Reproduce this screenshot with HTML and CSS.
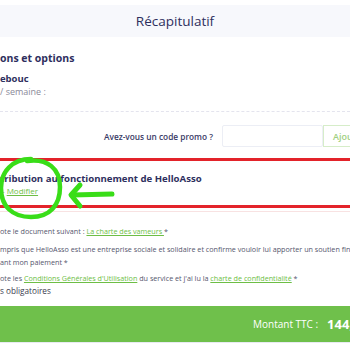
FILE: index.html
```html
<!DOCTYPE html>
<html lang="fr">
<head>
<meta charset="utf-8">
<link rel="stylesheet" href="styles.css">
</head>
<body>
<div class="page">
  <div class="header"><h1 class="title">Récapitulatif</h1></div>
  <div class="section">
    <div class="section-title">ons et options</div>
    <div class="item-name">ebouc</div>
    <div class="item-sub">/ semaine :</div>
  </div>
  <div class="dashed"></div>
  <div class="promo">
    <span class="promo-label">Avez-vous un code promo ?</span>
    <input class="promo-input" type="text">
    <button class="promo-btn">Ajouter</button>
  </div>
  <div class="contrib">
    <div class="contrib-title">tribution au fonctionnement de HelloAsso</div>
    <div class="contrib-mod">- <a class="link" href="#">Modifier</a></div>
    <svg class="annot" width="130" height="70" viewBox="0 0 130 70">
      <path d="M31 3 C12 3 1 16 1 32 C1 50 12 61 31 61 C50 61 60 49 60 31 C60 13 48 2 27 5" fill="none" stroke="#39dd18" stroke-width="4.5" stroke-linecap="round"/>
      <path d="M72 39 L112 38" fill="none" stroke="#39dd18" stroke-width="5" stroke-linecap="round"/>
      <path d="M80 29 L71 39 L80 50" fill="none" stroke="#39dd18" stroke-width="5" stroke-linecap="round" stroke-linejoin="round"/>
    </svg>
  </div>
  <div class="checks">
    <p class="check">ote le document suivant : <a class="link" href="#">La charte des vameurs </a> *</p>
    <p class="check">mpris que HelloAsso est une entreprise sociale et solidaire et confirme vouloir lui apporter un soutien financier<br>ant mon paiement *</p>
    <p class="check">ote les <a class="link" href="#">Conditions Générales d'Utilisation</a> du service et j'ai lu la <a class="link" href="#">charte de confidentialité</a> *</p>
    <p class="required">s obligatoires</p>
  </div>
  <div class="total">
    <span class="total-label">Montant TTC :</span>
    <span class="total-value">144,00 €</span>
  </div>
</div>
</body>
</html>
```
FILE: styles.css
```css
html, body {
  margin: 0;
  padding: 0;
  background: #ffffff;
  overflow: hidden;
}
.page {
  width: 350px;
  height: 350px;
  overflow: hidden;
  font-family: "Open Sans", "DejaVu Sans", sans-serif;
  color: #2e2f5e;
  padding-top: 5px;
  box-sizing: border-box;
}
.header {
  height: 32px;
  background: #f7f8fc;
  display: flex;
  align-items: center;
  justify-content: center;
}
.title {
  margin: 0;
  font-size: 13.5px;
  font-weight: 400;
  color: #2e2f5e;
  line-height: 18px;
}
.section {
  padding-top: 14px;
}
.section-title {
  font-size: 10.5px;
  font-weight: 700;
  line-height: 14px;
  margin-bottom: 7px;
}
.item-name {
  font-size: 9.5px;
  font-weight: 700;
  line-height: 14px;
}
.item-sub {
  font-size: 9px;
  color: #8a8a99;
  line-height: 12px;
}
.dashed {
  height: 0;
  border-top: 1px dashed #e4e4ee;
  margin-top: 13px;
}
.promo {
  display: flex;
  align-items: center;
  margin-top: 13px;
  white-space: nowrap;
}
.promo-label {
  font-size: 8.3px;
  font-weight: 600;
  width: 222px;
  box-sizing: border-box;
  padding-right: 9px;
  text-align: right;
  flex-shrink: 0;
  color: #3a3b66;
}
.promo-input {
  width: 101px;
  height: 22px;
  box-sizing: border-box;
  border: 1px solid #eceef5;
  border-radius: 2px;
  margin: 0;
  padding: 0;
  background: #fff;
  flex-shrink: 0;
}
.promo-btn {
  height: 22px;
  box-sizing: border-box;
  border: 1px solid #d6edc9;
  background: #fff;
  color: #9fd07f;
  font-family: "Open Sans", sans-serif;
  font-size: 9px;
  font-weight: 600;
  padding: 0 9px;
  margin: 0;
  flex-shrink: 0;
}
.contrib {
  position: relative;
  margin-top: 11px;
  height: 33px;
  border-top: 3px solid #e3232a;
  border-bottom: 3px solid #e3232a;
  padding-top: 11px;
}
.contrib-title {
  font-size: 9.6px;
  font-weight: 700;
  line-height: 13px;
  white-space: nowrap;
}
.contrib-mod {
  font-size: 8px;
  line-height: 12px;
  color: #8a8a99;
  padding-left: 2px;
}
.link {
  color: #6dbe45;
  text-decoration: underline;
}
.annot {
  position: absolute;
  left: 0;
  top: -5px;
  overflow: visible;
}
.checks {
  border-top: 1px solid #f8e2e2;
  margin-top: 3px;
  padding-top: 13px;
}
.check {
  margin: 0 0 5px;
  font-size: 7.2px;
  line-height: 13px;
  color: #55566e;
  white-space: nowrap;
}
.check + .check {
  margin-bottom: 3px;
}
.check + .check + .check {
  margin-bottom: 0;
}
.required {
  margin: 0;
  font-size: 8.2px;
  line-height: 12px;
  color: #3a3b4e;
}
.total {
  margin-top: 9px;
  height: 36px;
  background: #6fc04b;
  border-bottom: 1px solid #e8eaf2;
  display: flex;
  align-items: center;
  padding-left: 253px;
  white-space: nowrap;
  color: #fff;
}
.total-label {
  font-size: 10px;
  margin-right: 9px;
}
.total-value {
  font-size: 13px;
  font-weight: 700;
}
```
